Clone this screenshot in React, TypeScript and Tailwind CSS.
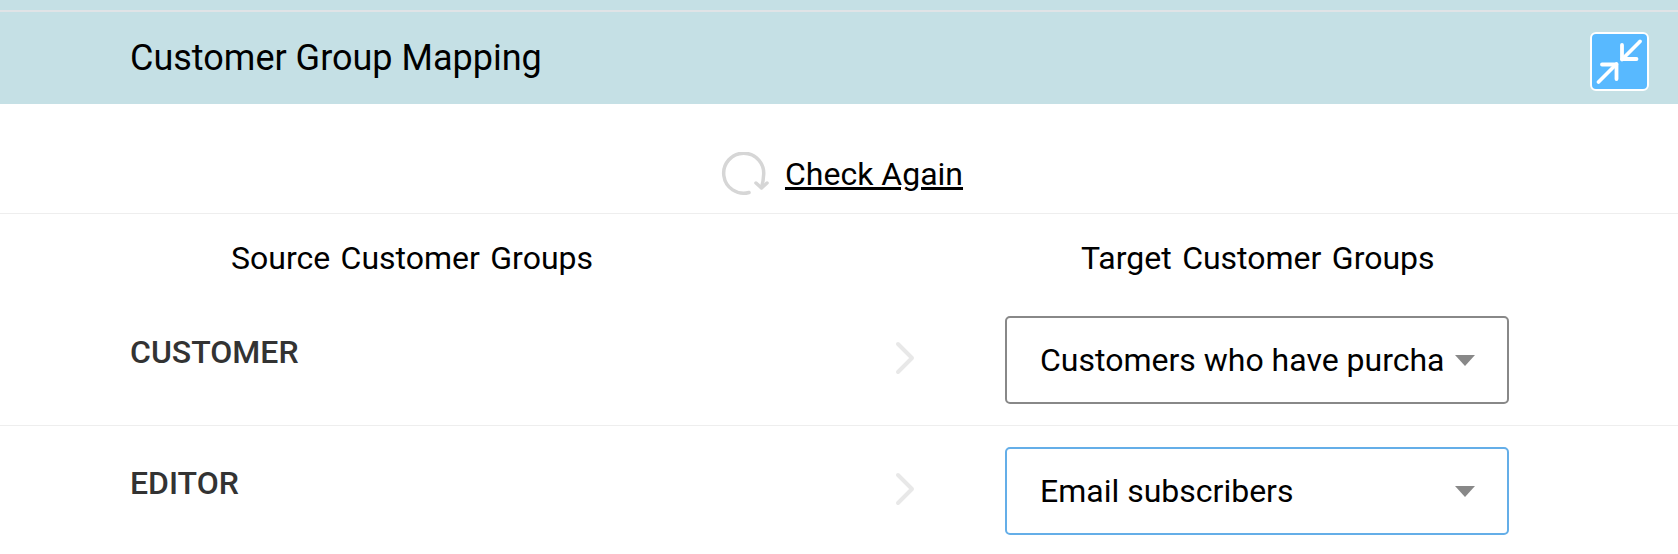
import React from "react";

const CollapseIcon = () => (
  <svg width="55" height="55" viewBox="0 0 55 55" fill="none" stroke="#fff" strokeWidth="3.8" strokeLinecap="round" strokeLinejoin="round">
    <path d="M48 7.5 30 25.5" />
    <path d="M30 11V25H44.5" />
    <path d="M6.5 48 24.5 30" />
    <path d="M10 30.5H24.5V45" />
  </svg>
);

const RefreshIcon = () => (
  <svg width="48" height="44" viewBox="0 0 48 44" fill="none" stroke="#d6d6d6" strokeWidth="3.5" strokeLinecap="round" strokeLinejoin="round">
    <path d="M28 40.5A20 20 0 1 1 42.5 24C42.5 28 41.5 32 40.5 35.5" />
    <path d="M35 31 40.5 36 46 31" />
  </svg>
);

const Chevron = () => (
  <svg width="20" height="34" viewBox="0 0 20 34" fill="none" stroke="#e8e8e8" strokeWidth="4" strokeLinecap="round" strokeLinejoin="round">
    <path d="M3 3 17 17 3 31" />
  </svg>
);

const Row = ({ name, value, focused }: { name: string; value: string; focused?: boolean }) => (
  <div className="flex h-[131px] items-start border-b border-[#eeeeee] pl-[130px] last:border-b-0">
    <div className="w-[765px] pt-[35px] text-[32px] font-medium leading-[44px] text-[#333333]">{name}</div>
    <div className="pt-[46px]">
      <Chevron />
    </div>
    <div
      className={`ml-[90px] mt-[21px] flex h-[88px] w-[504px] items-center justify-between rounded-[5px] border-2 bg-white pl-[33px] pr-[32px] ${
        focused ? "border-[#64aee8]" : "border-[#888888]"
      }`}
    >
      <span className="whitespace-nowrap text-[32px] text-black">{value}</span>
      <span className="h-0 w-0 border-x-[10px] border-t-[11px] border-x-transparent border-t-[#888888]" />
    </div>
  </div>
);

export default function App() {
  return (
    <div className="h-[554px] w-[1678px] overflow-hidden bg-white font-['Roboto',sans-serif] text-black">
      <div className="h-[104px] bg-[#c5e0e5] pt-[10px]">
        <div className="flex h-full items-center justify-between border-t-2 border-[#e0e3e6] pl-[130px] pr-[29px]">
          <h2 className="-mt-[1px] text-[36px] font-normal leading-none">Customer Group Mapping</h2>
          <button className="mt-[7px] h-[59px] w-[59px] rounded-[6px] border-2 border-white bg-[#58b9ff]">
            <CollapseIcon />
          </button>
        </div>
      </div>
      <div className="flex h-[110px] items-center justify-center gap-[16px] border-b border-[#eeeeee] pl-[6px] pt-[30px]">
        <RefreshIcon />
        <a className="text-[32px] leading-none underline underline-offset-[2px]">Check Again</a>
      </div>
      <div className="flex h-[81px] items-start pl-[231px] pt-[22px] text-[32px] leading-[44px] [word-spacing:2.5px]">
        <span className="w-[850px]">Source Customer Groups</span>
        <span>Target Customer Groups</span>
      </div>
      <Row name="CUSTOMER" value="Customers who have purcha" />
      <Row name="EDITOR" value="Email subscribers" focused />
    </div>
  );
}
